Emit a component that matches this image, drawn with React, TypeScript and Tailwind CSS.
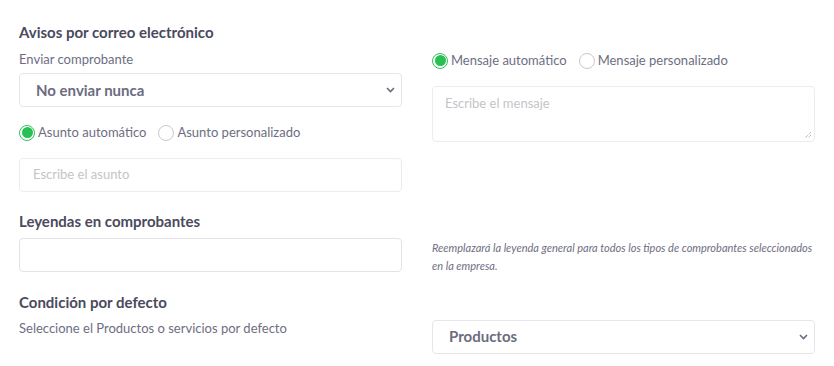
import React from "react";

const Chevron = () => (
  <svg width="9" height="6" viewBox="0 0 9 6" className="shrink-0">
    <path d="M1 1l3.5 3.5L8 1" fill="none" stroke="#6b6b80" strokeWidth="1.6" />
  </svg>
);

const Radio = ({ checked, label }: { checked?: boolean; label: string }) => (
  <label className="flex items-center gap-[3px] text-[13px] text-[#6e6e82]">
    {checked ? (
      <span className="w-4 h-4 rounded-full border-[1.5px] border-[#2fc35a] flex items-center justify-center">
        <span className="w-[11px] h-[11px] rounded-full bg-[#28c054]" />
      </span>
    ) : (
      <span className="w-4 h-4 rounded-full border border-[#c9c9cf] bg-white" />
    )}
    {label}
  </label>
);

const SelectBox = ({ value }: { value: string }) => (
  <div className="h-[34px] w-full rounded border border-[#e6e6ea] bg-white flex items-center justify-between pl-4 pr-[6px]">
    <span className="text-[15px] font-bold text-[#6c6c80]">{value}</span>
    <Chevron />
  </div>
);

const Input = ({ placeholder }: { placeholder?: string }) => (
  <div className="h-[34px] w-full rounded border border-[#ececf0] bg-white flex items-center px-[13px]">
    <span className="text-[13px] text-[#c4c4c8]">{placeholder}</span>
  </div>
);

const Heading = ({ children }: { children: React.ReactNode }) => (
  <h3 className="text-[15px] font-bold text-[#4a4a5c] leading-5">{children}</h3>
);

export default function App() {
  return (
    <div
      className="w-[834px] h-[366px] bg-white px-[19px] overflow-hidden"
      style={{ fontFamily: "Lato, 'Noto Sans', sans-serif" }}
    >
      <div className="grid grid-cols-2 gap-x-[30px] pt-[22px]">
        <div className="flex flex-col">
          <Heading>Avisos por correo electrónico</Heading>
          <p className="mt-[9px] text-[13px] leading-4 text-[#6e6e82]">Enviar comprobante</p>
          <div className="mt-[6px]">
            <SelectBox value="No enviar nunca" />
          </div>
          <div className="mt-[16px] flex items-center gap-[12px]">
            <Radio checked label="Asunto automático" />
            <Radio label="Asunto personalizado" />
          </div>
          <div className="mt-[15px]">
            <Input placeholder="Escribe el asunto" />
          </div>
        </div>
        <div className="flex flex-col pt-[29px]">
          <div className="flex items-center gap-[12px]">
            <Radio checked label="Mensaje automático" />
            <Radio label="Mensaje personalizado" />
          </div>
          <div className="mt-[15px] h-[56px] w-full rounded border border-[#ececf0] bg-white px-[12px] pt-[3px] relative">
            <span className="text-[13px] text-[#c4c4c8]">Escribe el mensaje</span>
            <svg width="8" height="8" viewBox="0 0 8 8" className="absolute right-[2px] bottom-[2px]">
              <path d="M7 1L1 7M7 4L4 7" stroke="#9a9aa0" strokeWidth="1" strokeDasharray="1 1" />
            </svg>
          </div>
        </div>
      </div>

      <div className="mt-[19px]">
        <Heading>Leyendas en comprobantes</Heading>
      </div>
      <div className="grid grid-cols-2 gap-x-[30px] mt-[7px] items-start">
        <div className="h-[34px] w-full rounded border border-[#e3e3e8] bg-white" />
        <p className="pt-[1px] text-[11px] italic leading-[18px] text-[#6e6e82]">
          Reemplazará la leyenda general para todos los tipos de comprobantes seleccionados en la empresa.
        </p>
      </div>

      <div className="mt-[17px]">
        <Heading>Condición por defecto</Heading>
      </div>
      <div className="grid grid-cols-2 gap-x-[30px] mt-[8px] items-start">
        <p className="text-[13px] leading-4 text-[#6e6e82]">Seleccione el Productos o servicios por defecto</p>
        <SelectBox value="Productos" />
      </div>
    </div>
  );
}
